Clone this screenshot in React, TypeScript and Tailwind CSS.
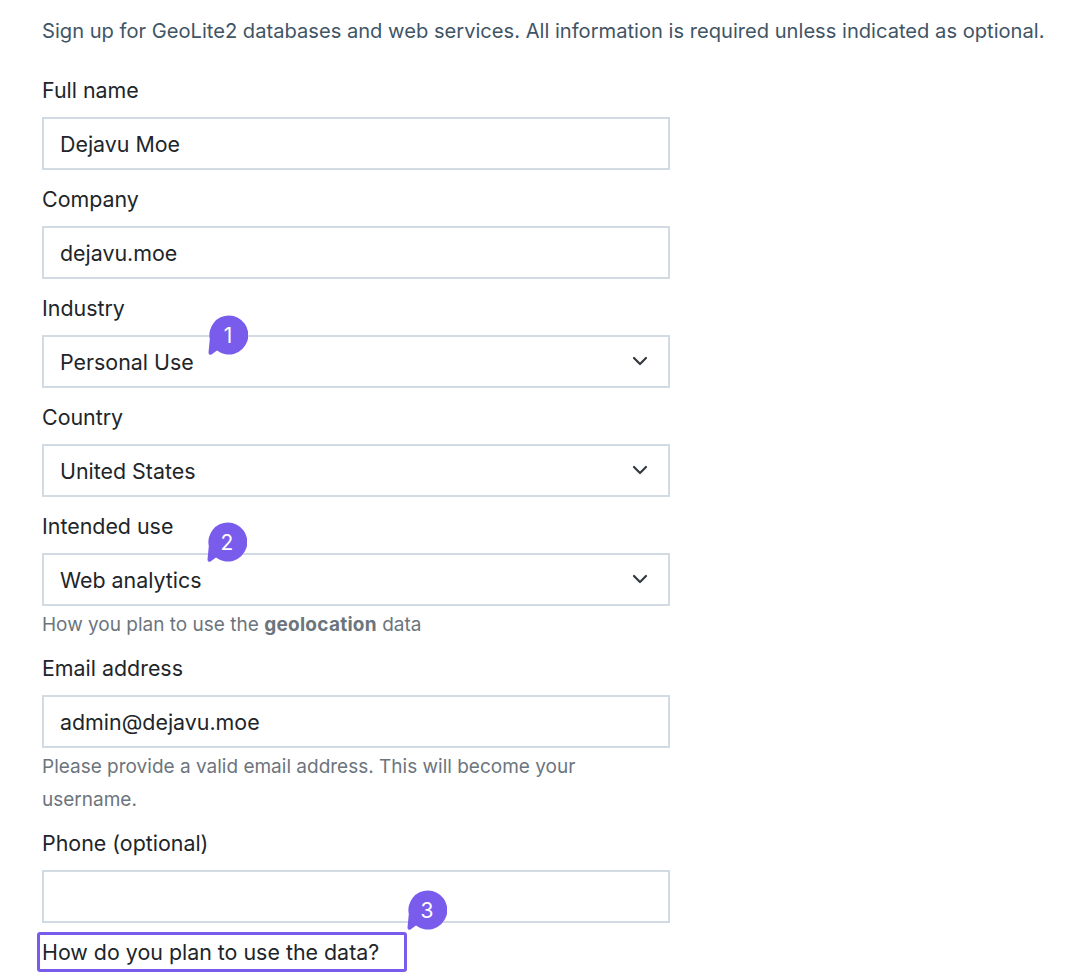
import React from 'react'

function Bubble({ n, className }: { n: number; className: string }) {
  return (
    <div className={`absolute w-[40px] h-[41px] text-white text-[21px] leading-[42px] text-center ${className}`}>
      <svg className="absolute left-0 top-0" width="40" height="41" viewBox="0 0 40 41">
        <path
          d="M21 .5A19.5 19.5 0 1 1 9 35.5L3.5 39.5Q.5 40.8.5 37.5L1.8 24A19.5 19.5 0 0 1 21 .5Z"
          fill="#7a5cec"
        />
      </svg>
      <span className="relative">{n}</span>
    </div>
  )
}

function Chevron() {
  return (
    <svg className="absolute right-[20px] top-[18px]" width="16" height="12" viewBox="0 0 16 12" fill="none">
      <path d="M2 3l6 6 6-6" stroke="#343a40" strokeWidth="2.2" strokeLinecap="round" strokeLinejoin="round" />
    </svg>
  )
}

function Label({ children }: { children: React.ReactNode }) {
  return <div className="mt-[11px] mb-[9px] h-[36px] leading-[36px] text-[21.4px] text-[#212529]">{children}</div>
}

function Field({ value, select, children }: { value?: string; select?: boolean; children?: React.ReactNode }) {
  return (
    <div className="relative w-[628px] h-[53px] border-2 border-[#d2dae3] bg-white pl-[16px] leading-[51px] text-[21.4px] text-[#212529]">
      {value}
      {select && <Chevron />}
      {children}
    </div>
  )
}

function Help({ children }: { children: React.ReactNode }) {
  return <div className="w-[628px] mt-[2px] -mb-[2px] leading-[33px] text-[19px] text-[#6c757d]">{children}</div>
}

export default function App() {
  return (
    <div className="relative w-[1080px] h-[978px] bg-white px-[42px] overflow-hidden font-['Inter',sans-serif]">
      <div className="pt-[16px] h-[61px] leading-[30px] text-[20.14px] text-[#3f5566] whitespace-nowrap">
        Sign up for GeoLite2 databases and web services. All information is required unless indicated as optional.
      </div>

      <Label>Full name</Label>
      <Field value="Dejavu Moe" />

      <Label>Company</Label>
      <Field value="dejavu.moe" />

      <Label>Industry</Label>
      <Field value="Personal Use" select>
        <Bubble n={1} className="left-[164px] -top-[22px]" />
      </Field>

      <Label>Country</Label>
      <Field value="United States" select />

      <Label>Intended use</Label>
      <Field value="Web analytics" select>
        <Bubble n={2} className="left-[163px] -top-[33px]" />
      </Field>
      <Help>
        How you plan to use the <b className="tracking-[0.27px]">geolocation</b> data
      </Help>

      <Label>Email address</Label>
      <Field value="admin@dejavu.moe" />
      <Help>Please provide a valid email address. This will become your username.</Help>

      <Label>Phone (optional)</Label>
      <Field>
        <Bubble n={3} className="left-[363px] top-[18px]" />
      </Field>

      <div className="mt-[9px] -ml-[5px] w-[370px] h-[40px] border-[3px] border-[#7a5cec] rounded-[3px] pl-[2px] leading-[35px] text-[21.4px] text-[#212529] whitespace-nowrap">
        How do you plan to use the data?
      </div>
    </div>
  )
}
